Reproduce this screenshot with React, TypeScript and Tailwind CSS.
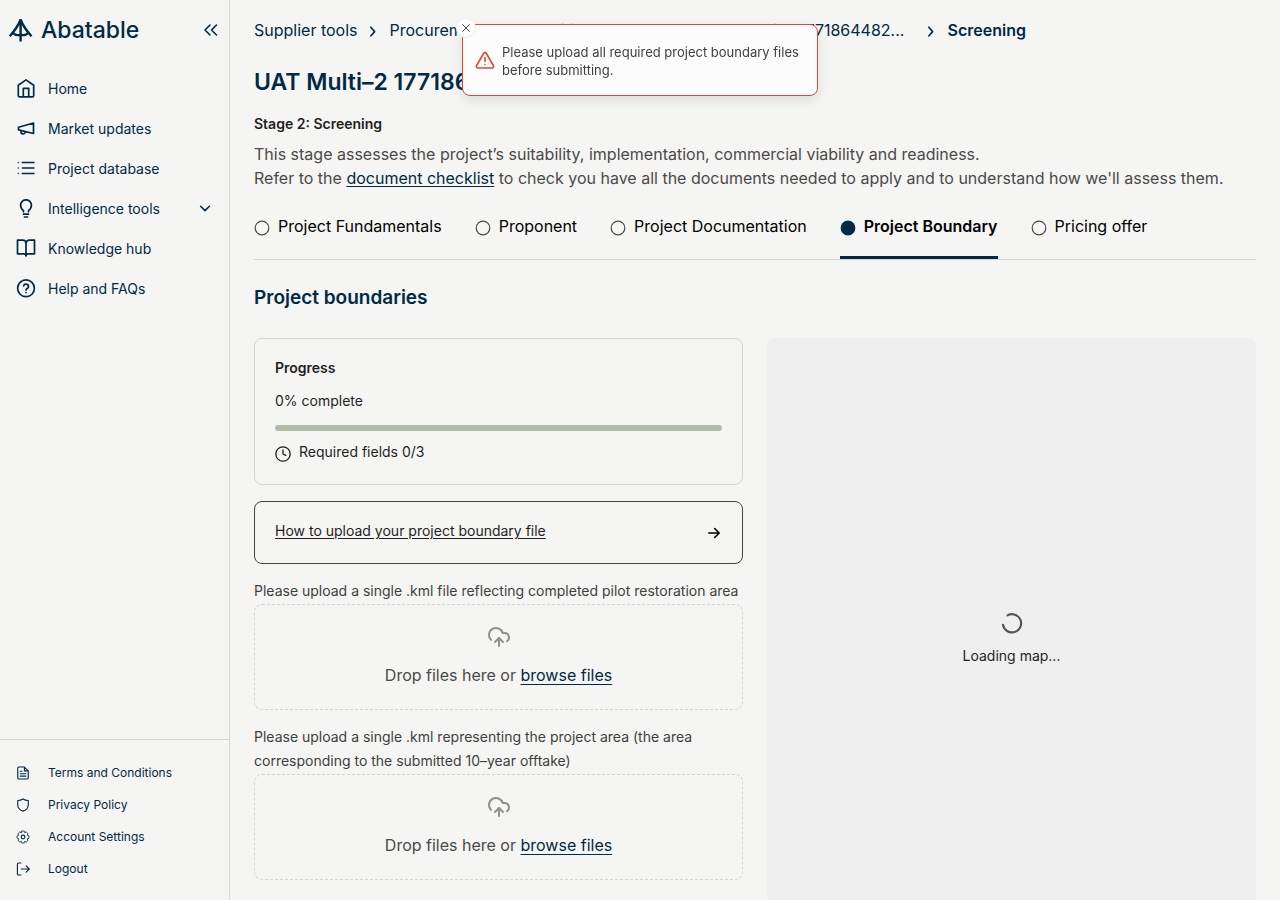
import type { ReactNode } from "react";
import { CloudUpload } from "lucide-react";

type IconProps = { className?: string; size?: number; width?: number; children: ReactNode };

function Icon({ className = "", size = 20, width = 1.7, children }: IconProps) {
  return (
    <svg
      width={size}
      height={size}
      viewBox="0 0 20 20"
      fill="none"
      stroke="currentColor"
      strokeWidth={width}
      strokeLinecap="round"
      strokeLinejoin="round"
      aria-hidden="true"
      className={`shrink-0 ${className}`}
    >
      {children}
    </svg>
  );
}

const chevronRight = <path d="M6 6.500l4.800 5.500L6 17.500" />;

const mainLinks: { label: string; icon: ReactNode; expandable?: boolean }[] = [
  {
    label: "Home",
    icon: <path d="M2.300 6.200 10 .9l7.700 5.300v10.300a1.400 1.400 0 0 1-1.400 1.400H3.700a1.400 1.400 0 0 1-1.400-1.400ZM7.300 17.900V9.300h5.400v8.600" />,
  },
  {
    label: "Market updates",
    icon: <path d="M17.500 4v10.500L2.500 10.800V8.200ZM5 11.600v.9a2.100 2.100 0 0 0 4.200.5l.1-.4" />,
  },
  {
    label: "Project database",
    icon: <path d="M6.200 3.500H18M6.200 9H18M6.200 14.500H18M2.200 3.500h.1M2.200 9h.1M2.200 14.500h.1" strokeWidth="1.400" />,
  },
  {
    label: "Intelligence tools",
    icon: <path d="M7.500 12.800v-1.200C6 10.500 4.600 8.900 4.600 6.200a5.400 5.400 0 0 1 10.800 0c0 2.700-1.400 4.300-2.900 5.400v1.200M7.500 15.200h5M8.500 18h3" />,
    expandable: true,
  },
  {
    label: "Knowledge hub",
    icon: <path d="M1.500 1.200h5.300A3.200 3.200 0 0 1 10 4.400v12.600a2.400 2.400 0 0 0-2.400-2.200H1.500ZM18.500 1.200h-5.300A3.200 3.200 0 0 0 10 4.400v12.600a2.400 2.400 0 0 1 2.400-2.200h6.100Z" />,
  },
  {
    label: "Help and FAQs",
    icon: (
      <>
        <circle cx="10" cy="9.300" r="8.400" />
        <path d="M7.600 6.900a2.500 2.500 0 0 1 4.900.8c0 1.600-2.400 2-2.400 3.200M10 13.500v.1" />
      </>
    ),
  },
];

const footerLinks: { label: string; icon: ReactNode }[] = [
  {
    label: "Terms and Conditions",
    icon: <path d="M12 1.500H4a1.500 1.500 0 0 0-1.500 1.500v14A1.500 1.500 0 0 0 4 18.500h12a1.500 1.500 0 0 0 1.500-1.500V7ZM12 1.500V7h5.500M6 7.500h2.500M6 11h8M6 14.500h8" />,
  },
  {
    label: "Privacy Policy",
    icon: <path d="M10 1.300c2.600 1.700 5 2.200 7.500 2.200V10c0 4.800-3.500 7.500-7.500 8.700C6 17.500 2.500 14.800 2.500 10V3.500c2.500 0 4.900-.5 7.500-2.200Z" />,
  },
  {
    label: "Account Settings",
    icon: (
      <>
        <circle cx="10" cy="10" r="2.600" />
        <path d="M8.300 1.500h3.400l.7 2.300 2.300-1 2.400 2.400-1 2.300 2.400.8v3.400l-2.400.8 1 2.300-2.400 2.400-2.300-1-.7 2.300H8.300l-.7-2.300-2.300 1-2.400-2.400 1-2.300-2.400-.8V8.300l2.400-.8-1-2.300 2.400-2.400 2.300 1Z" strokeWidth="1.200" />
      </>
    ),
  },
  {
    label: "Logout",
    icon: <path d="M7 1.500H3.500A1.500 1.500 0 0 0 2 3v14a1.500 1.500 0 0 0 1.500 1.500H7M7.500 10H19M14.500 5.500 19 10l-4.500 4.500" />,
  },
];

const tabs = ["Project Fundamentals", "Proponent", "Project Documentation", "Project Boundary", "Pricing offer"];
const activeTab = "Project Boundary";

const uploads = [
  "Please upload a single .kml file reflecting completed pilot restoration area",
  "Please upload a single .kml representing the project area (the area corresponding to the submitted 10–year offtake)",
];

function Sidebar() {
  return (
    <aside className="sticky top-0 flex h-screen w-[230px] shrink-0 flex-col border-r border-[#d6d6d6] text-[#002a45]">
      <div className="flex items-center justify-between pt-3 pr-2 pl-2">
        <a href="#home" className="flex items-center gap-[7px] text-[23px] leading-9 font-medium">
          <svg width="26" height="26" viewBox="0 0 26 26" fill="none" stroke="currentColor" strokeWidth="2.400" aria-hidden="true">
            <path d="M12.600 2v22.500M12.600 2.800C10.500 8 6.500 14 1.700 19.200M12.600 2.800c2.100 5.200 6.100 11.200 10.900 16.400M4.500 15.600c2.800 2.600 6 2.900 8.100 1.900 2.100 1 5.300.7 8.100-1.900" />
          </svg>
          Abatable
        </a>
        <button type="button" aria-label="Collapse menu">
          <Icon width={1.6}>
            <path d="M9 5l-5 5 5 5M15.500 5l-5 5 5 5" />
          </Icon>
        </button>
      </div>
      <nav aria-label="Main" className="mt-[21px] flex flex-col text-sm">
        {mainLinks.map((link) => (
          <a key={link.label} href="#nav" className="flex h-10 items-center gap-3 pr-4 pl-4">
            <Icon>{link.icon}</Icon>
            <span className="grow">{link.label}</span>
            {link.expandable && (
              <Icon size={16} width={1.9}>
                <path d="M4.500 6.500l5.500 5.500 5.500-5.500" />
              </Icon>
            )}
          </a>
        ))}
      </nav>
      <nav aria-label="Account" className="mt-auto flex flex-col border-t border-[#d6d6d6] pt-[17px] pb-[15px] text-xs">
        {footerLinks.map((link) => (
          <a key={link.label} href="#account" className="flex h-8 items-center gap-[18px] pl-4">
            <Icon size={14} width={1.6}>
              {link.icon}
            </Icon>
            {link.label}
          </a>
        ))}
      </nav>
    </aside>
  );
}

function Toast() {
  return (
    <div className="pointer-events-none fixed inset-x-0 top-6 z-10 flex justify-center">
      <div
        role="alert"
        className="pointer-events-auto relative flex w-[356px] items-center gap-[7px] rounded-lg border border-[#dc4a33] bg-[#fcfcfc] px-3 pt-[18px] pb-4 font-[Inter,sans-serif] text-[13px] leading-[18px] text-[#3f3f3f] shadow-[0_4px_12px_rgba(0,0,0,0.1)]"
      >
        <button
          type="button"
          aria-label="Close"
          className="absolute -top-[7px] -left-[7px] flex size-5 items-center justify-center rounded-full border border-[#ededed] bg-[#fcfcfc]"
        >
          <Icon size={12} width={1.6}>
            <path d="M4.500 4.500l11 11M15.500 4.500l-11 11" />
          </Icon>
        </button>
        <Icon size={20} width={1.6} className="text-[#dc4a33]">
          <path d="M8.600 2.500 1.600 14.500a1.600 1.600 0 0 0 1.400 2.500h14a1.600 1.600 0 0 0 1.400-2.500L11.400 2.500a1.600 1.600 0 0 0-2.800 0ZM10 6.500v4M10 13.500v.1" />
        </Icon>
        <p>Please upload all required project boundary files before submitting.</p>
      </div>
    </div>
  );
}

function UploadField({ label }: { label: string }) {
  return (
    <section aria-label={label}>
      <p className="pb-px text-sm leading-6 text-[#3f3f3f]">{label}</p>
      <div className="flex h-[106px] flex-col items-center rounded-lg border border-dashed border-[#d3d3d3] pt-5 text-[#4a4a4a]">
        <CloudUpload size={24} strokeWidth={2} className="text-[#8f8f8f]" aria-hidden="true" />
        <p className="mt-[14px] leading-6">
          Drop files here or{" "}
          <button type="button" className="text-[#002a45] underline underline-offset-3">
            browse files
          </button>
        </p>
      </div>
    </section>
  );
}

export default function App() {
  return (
    <div className="flex min-h-screen bg-[#f5f5f3] font-[Inter,'Liberation_Sans',sans-serif] text-[#1f1f1f]">
      <Toast />
      <Sidebar />
      <main className="min-w-0 grow px-6 pt-[18px] pb-6">
        <nav aria-label="Breadcrumb" className="flex items-center gap-2 leading-6 whitespace-nowrap text-[#002a45]">
          <a href="#supplier">Supplier tools</a>
          <Icon size={16} width={2}>{chevronRight}</Icon>
          <a href="#procurement" className="w-[282px] truncate">Procurement opportunities</a>
          <Icon size={16} width={2}>{chevronRight}</Icon>
          <a href="#project" className="w-[212px]">UAT Multi–2 1771864482...</a>
          <Icon size={16} width={2}>{chevronRight}</Icon>
          <span className="font-semibold">Screening</span>
        </nav>

        <h1 className="mt-6 text-[23px] leading-8 font-semibold text-[#002a45]">UAT Multi–2 177186448213</h1>
        <h2 className="mt-4 text-sm leading-5 font-semibold">Stage 2: Screening</h2>
        <p className="mt-2 leading-6 text-[#4a4a4a]">
          This stage assesses the project’s suitability, implementation, commercial viability and readiness.
          <br />
          Refer to the{" "}
          <a href="#checklist" className="text-[#002a45] underline underline-offset-2">
            document checklist
          </a>{" "}
          to check you have all the documents needed to apply and to understand how we'll assess them.
        </p>

        <div role="tablist" className="mt-6 flex gap-[33px] border-b border-[#d6d6d6] text-black">
          {tabs.map((tab) => {
            const active = tab === activeTab;
            return (
              <button
                key={tab}
                type="button"
                role="tab"
                aria-selected={active}
                className={`flex items-center gap-2 border-b-3 pb-[18px] leading-6 whitespace-nowrap ${active ? "border-[#002a45] font-semibold" : "border-transparent"}`}
              >
                <svg width="16" height="16" viewBox="0 0 16 16" aria-hidden="true" className="mt-1 shrink-0">
                  <circle
                    cx="8"
                    cy="8"
                    r="6.800"
                    strokeWidth="1.200"
                    className={active ? "fill-[#002a45] stroke-[#002a45]" : "fill-none stroke-[#4a4a4a]"}
                  />
                </svg>
                {tab}
              </button>
            );
          })}
        </div>

        <h2 className="mt-6 text-[19px] leading-7 font-semibold text-[#002a45]">Project boundaries</h2>

        <div className="mt-[26px] grid grid-cols-2 gap-6">
          <div className="flex flex-col">
            <section className="rounded-lg border border-[#d6d6d6] px-5 pt-[17px] pb-5 text-sm leading-6">
              <h3 className="font-semibold">Progress</h3>
              <p className="mt-[9px]">0% complete</p>
              <div role="progressbar" aria-valuenow={0} aria-label="Progress" className="mt-3 h-1.5 rounded-sm bg-[#b3bda3]" />
              <p className="mt-[9px] flex items-center gap-2">
                <Icon size={16} width={1.6} className="mt-1">
                  <circle cx="10" cy="10" r="9" />
                  <path d="M10 5v5l3.500 1.800" />
                </Icon>
                Required fields 0/3
              </p>
            </section>
            <a
              href="#guide"
              className="mt-4 mb-[15px] flex h-[63px] items-center justify-between rounded-lg border border-[#444444] px-5 text-sm leading-5"
            >
              <span className="pb-[3px] underline underline-offset-2">How to upload your project boundary file</span>
              <Icon size={16} width={2} className="text-black">
                <path d="M3.500 10h13M11 4.500l5.500 5.500-5.500 5.500" />
              </Icon>
            </a>
            <div className="flex flex-col gap-[15px]">
              {uploads.map((label) => (
                <UploadField key={label} label={label} />
              ))}
            </div>
          </div>
          <div className="flex min-h-[600px] flex-col items-center justify-center rounded-lg bg-[#efefef] text-sm leading-5">
            <Icon size={24} width={1.8} className="text-[#555555]">
              <path d="M6.300 3.600A7.600 7.600 0 1 1 2.500 11.500" />
            </Icon>
            <p className="mt-[11px]">Loading map...</p>
          </div>
        </div>
      </main>
    </div>
  );
}
